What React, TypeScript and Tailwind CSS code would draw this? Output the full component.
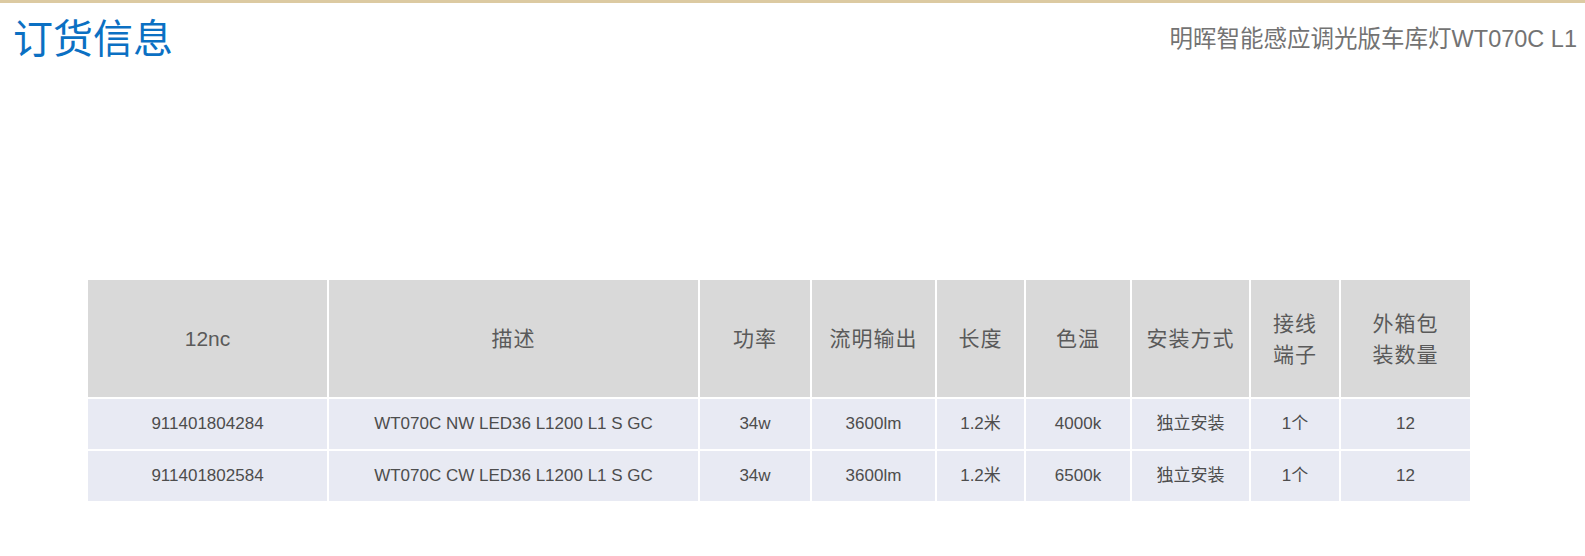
import React from 'react';

const FONT = { fontFamily: '"Liberation Sans", "Noto Sans CJK SC", sans-serif' };

const headers: string[][] = [
  ['12nc'],
  ['描述'],
  ['功率'],
  ['流明输出'],
  ['长度'],
  ['色温'],
  ['安装方式'],
  ['接线', '端子'],
  ['外箱包', '装数量'],
];

const rows: string[][] = [
  ['911401804284', 'WT070C NW LED36 L1200 L1 S GC', '34w', '3600lm', '1.2米', '4000k', '独立安装', '1个', '12'],
  ['911401802584', 'WT070C CW LED36 L1200 L1 S GC', '34w', '3600lm', '1.2米', '6500k', '独立安装', '1个', '12'],
];

const App: React.FC = () => {
  return (
    <div className="w-[1585px] min-h-[556px] bg-white" style={FONT}>
      {/* top rule */}
      <div className="h-[3px] bg-[#dccaa2]" />

      {/* Header */}
      <div className="flex justify-between items-center pl-[13px] pr-[8px] pt-[16px]">
        <h1 className="text-[40px] leading-[40px] text-[#0b70c3] font-normal">订货信息</h1>
        <span className="text-[23.5px] leading-[30px] text-[#737373]">明晖智能感应调光版车库灯WT070C L1</span>
      </div>

      {/* Ordering table */}
      <div className="ml-[88px] mt-[221px] grid grid-cols-[239px_369px_110px_123px_87px_104px_117px_88px_129px] grid-rows-[117px_50px_50px] gap-[2px] w-[1382px]">
        {headers.map((lines, i) => (
          <div
            key={`h-${i}`}
            className={`bg-[#d9d9d9] flex flex-col items-center justify-center text-[21px] leading-[31px] text-[#5a5a5a] ${i === 0 ? '' : 'tracking-[1px]'}`}
          >
            {lines.map((l) => (
              <span key={l}>{l}</span>
            ))}
          </div>
        ))}
        {rows.map((row, r) =>
          row.map((cell, c) => (
            <div
              key={`${r}-${c}`}
              className="bg-[#e8eaf3] flex items-center justify-center text-[17px] text-[#4d4d4d]"
            >
              {cell}
            </div>
          ))
        )}
      </div>
    </div>
  );
};

export default App;
